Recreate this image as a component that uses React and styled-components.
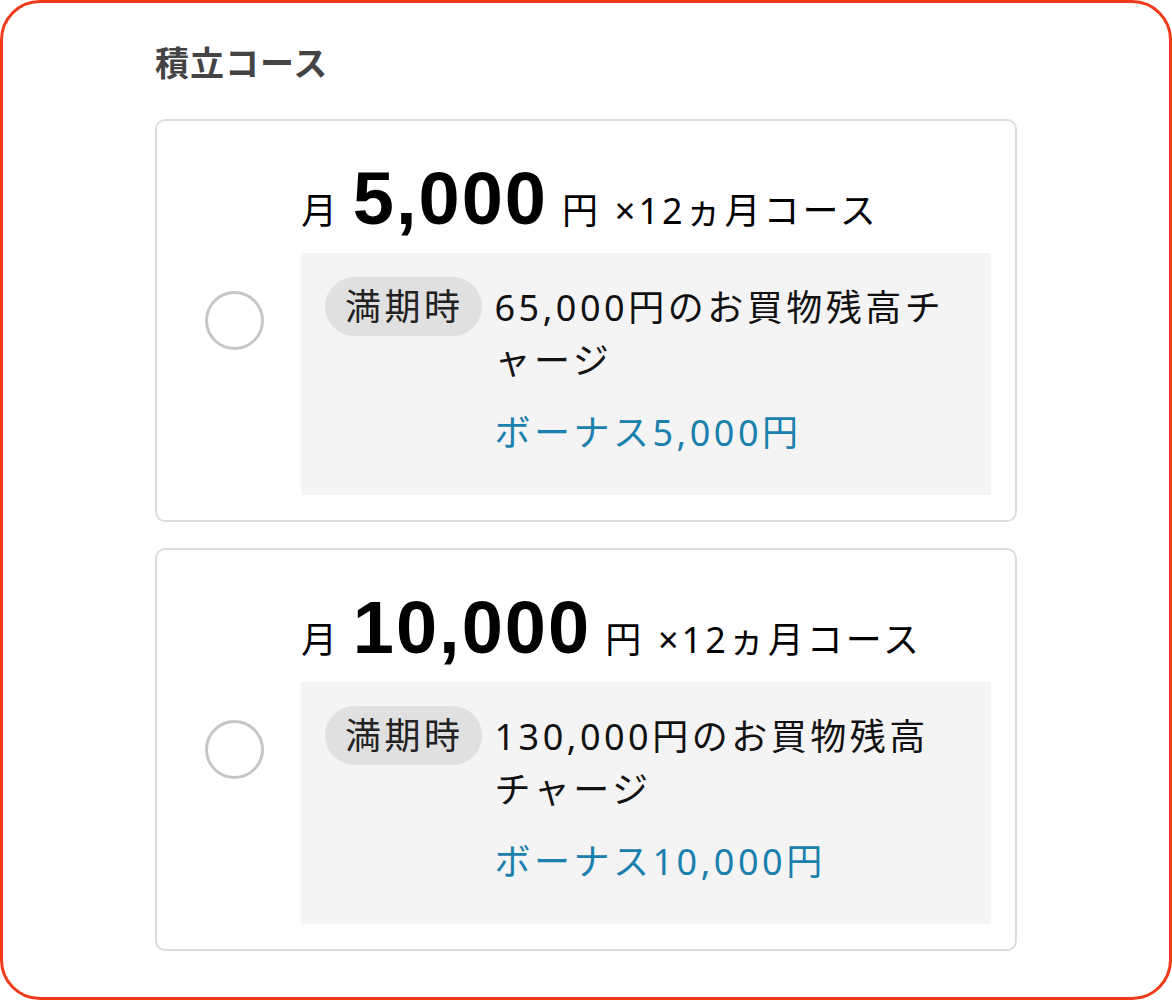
import React from "react";
import styled, { createGlobalStyle } from "styled-components";

const GlobalStyle = createGlobalStyle`
  html, body { margin: 0; padding: 0; background: #ffffff; }
  body { font-family: "Noto Sans", "Noto Sans CJK JP", sans-serif; }
  * { box-sizing: border-box; }
`;

const Frame = styled.div`
  width: 1172px;
  height: 1000px;
  border: 3px solid #f03a1a;
  border-radius: 40px;
  padding: 42px 0 0 152px;
  background: #fff;
`;

const Title = styled.h2`
  margin: 0;
  font-family: "Noto Sans CJK JP", sans-serif;
  font-size: 34px;
  line-height: 34px;
  font-weight: 700;
  letter-spacing: 1px;
  color: #444;
`;

const CourseList = styled.div`
  display: flex;
  flex-direction: column;
  gap: 26px;
  margin-top: 40px;
  width: 862px;
`;

const Card = styled.label`
  display: flex;
  align-items: center;
  gap: 37px;
  height: 403px;
  padding: 0 24px 0 48px;
  border: 2px solid #dcdcdc;
  border-radius: 10px;
  background: #fff;
  cursor: pointer;
`;

const Radio = styled.span`
  flex: 0 0 59px;
  width: 59px;
  height: 59px;
  border-radius: 50%;
  border: 3px solid #c6c6c6;
  background: #fff;
`;

const Content = styled.div`
  flex: 1;
  display: flex;
  flex-direction: column;
  padding: 41px 0 25px;
`;

const Heading = styled.div`
  display: flex;
  align-items: baseline;
  gap: 14px;
  color: #000;
`;

const Unit = styled.span`
  font-size: 36px;
  line-height: 36px;
  letter-spacing: 1.8px;
`;

const Term = styled(Unit)`
  margin-left: 1px;
  letter-spacing: 3px;
`;

const Amount = styled.span`
  font-family: "Liberation Sans", Arial, sans-serif;
  font-weight: 700;
  font-size: 74px;
  line-height: 74px;
  letter-spacing: 2px;
`;

const InfoBox = styled.div`
  display: flex;
  align-items: flex-start;
  gap: 13px;
  margin-top: 17px;
  padding: 24px 24px 36px 24px;
  background: #f4f4f4;
`;

const Badge = styled.span`
  flex: 0 0 auto;
  height: 59px;
  line-height: 59px;
  padding: 0 18px 0 20px;
  border-radius: 30px;
  background: #e0e0e0;
  color: #222;
  font-size: 36px;
  letter-spacing: 3.5px;
`;

const Detail = styled.div`
  margin-top: 3.5px;
  max-width: 462px;
  display: flex;
  flex-direction: column;
  gap: 19px;
`;

const Charge = styled.p`
  margin: 0;
  font-size: 36px;
  line-height: 53px;
  letter-spacing: 3.5px;
  color: #111;
  line-break: loose;
`;

const Bonus = styled(Charge)`
  color: #1a80ad;
`;

const courses = [
  { amount: "5,000", total: "65,000", bonus: "5,000" },
  { amount: "10,000", total: "130,000", bonus: "10,000" },
];

export default function App() {
  return (
    <>
      <GlobalStyle />
      <Frame>
        <Title>積立コース</Title>
        <CourseList>
          {courses.map((c) => (
            <Card key={c.amount}>
              <Radio />
              <Content>
                <Heading>
                  <Unit>月</Unit>
                  <Amount>{c.amount}</Amount>
                  <Unit>円</Unit>
                  <Term>×12ヵ月コース</Term>
                </Heading>
                <InfoBox>
                  <Badge>満期時</Badge>
                  <Detail>
                    <Charge>{c.total}円のお買物残高チャージ</Charge>
                    <Bonus>ボーナス{c.bonus}円</Bonus>
                  </Detail>
                </InfoBox>
              </Content>
            </Card>
          ))}
        </CourseList>
      </Frame>
    </>
  );
}
